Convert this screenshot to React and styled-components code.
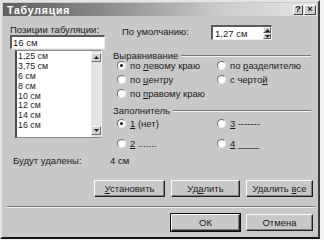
import styled, { createGlobalStyle } from "styled-components";

const GlobalStyle = createGlobalStyle`
  html, body {
    margin: 0;
    padding: 0;
    background: #f2f2f2;
  }
  body {
    font-family: "Liberation Sans", Arial, sans-serif;
  }
`;

const Dialog = styled.div`
  box-sizing: border-box;
  width: 320px;
  height: 239px;
  background: #c8c8c8;
  border-top: 2px solid #e4e4e4;
  border-left: 2px solid #e4e4e4;
  border-right: 2px solid #3c3c3c;
  border-bottom: 2px solid #141414;
  padding: 1px;
  display: flex;
  flex-direction: column;
  font-size: 9.5px;
  color: #1c1c1c;
`;

const TitleBar = styled.div`
  height: 13px;
  flex: none;
  display: flex;
  align-items: center;
  justify-content: space-between;
  padding: 0 1px 0 4px;
  background: linear-gradient(to right, #606060 0%, #868686 30%, #cccccc 70%, #e6e6e6 100%);
`;

const Title = styled.span`
  color: #fff;
  font-weight: bold;
  font-size: 10.5px;
  letter-spacing: 0.8px;
`;

const TitleButtons = styled.div`
  display: flex;
  gap: 1px;
`;

const TitleButton = styled.div`
  box-sizing: border-box;
  width: ${(p) => p.$w || 10}px;
  height: 10px;
  background: #cfcfcf;
  border: 1px solid;
  border-color: #fff #404040 #404040 #fff;
  display: flex;
  align-items: center;
  justify-content: center;
  font-size: 9px;
  font-weight: bold;
  line-height: 1;
  color: #111;
`;

const Top = styled.div`
  display: flex;
  height: 138px;
  flex: none;
`;

const LeftCol = styled.div`
  width: 95px;
  margin-left: 7px;
  display: flex;
  flex-direction: column;
`;

const Label = styled.div`
  height: 11px;
  line-height: 11px;
  margin-top: ${(p) => p.$mt || 0}px;
  white-space: nowrap;
`;

const TextInput = styled.div`
  box-sizing: border-box;
  height: 14px;
  background: #fff;
  border-top: 2px solid #5a5a5a;
  border-left: 2px solid #5a5a5a;
  border-right: 1px solid #eee;
  border-bottom: 1px solid #eee;
  padding-left: 1px;
  line-height: 11px;
  font-size: 9.5px;
  display: flex;
  align-items: center;
`;

const List = styled.div`
  box-sizing: border-box;
  height: 88px;
  width: 87px;
  margin-left: 5px;
  margin-top: 1px;
  background: #fff;
  border-left: 2px solid #4a4a4a;
  border-top: 1px solid #8a8a8a;
  border-bottom: 1px solid #8a8a8a;
  border-right: 1px solid #eee;
  display: flex;
`;

const Items = styled.div`
  flex: 1;
  padding-top: 1px;
`;

const Item = styled.div`
  height: 9.9px;
  line-height: 9.9px;
  padding-left: 1px;
  font-size: 8.8px;
`;

const ScrollBar = styled.div`
  width: 10px;
  background: #e4e4e4;
  display: flex;
  flex-direction: column;
  justify-content: space-between;
  padding: 2px 0;
  box-sizing: border-box;
`;

const ScrollButton = styled.div`
  box-sizing: border-box;
  height: 9px;
  background: #d0d0d0;
  border: 1px solid;
  border-color: #f4f4f4 #707070 #707070 #f4f4f4;
  display: flex;
  align-items: center;
  justify-content: center;
`;

const RightCol = styled.div`
  flex: 1;
  margin-left: 8px;
  margin-right: 2px;
  display: flex;
  flex-direction: column;
`;

const DefaultRow = styled.div`
  margin-top: 9px;
  height: 15px;
  display: flex;
  align-items: center;
`;

const DefaultLabel = styled.div`
  width: 98px;
  padding-left: 9px;
  box-sizing: border-box;
  margin-top: -2px;
`;

const SpinBox = styled.div`
  box-sizing: border-box;
  width: 61px;
  height: 15px;
  background: #fff;
  border-top: 2px solid #5a5a5a;
  border-left: 2px solid #5a5a5a;
  border-right: 1px solid #eee;
  border-bottom: 1px solid #eee;
  display: flex;
  align-items: center;
  padding-left: 2px;
`;

const SpinText = styled.span`
  flex: 1;
`;

const Spinner = styled.div`
  width: 8px;
  height: 12px;
  display: flex;
  flex-direction: column;
`;

const SpinPart = styled.div`
  flex: 1;
  box-sizing: border-box;
  background: #d0d0d0;
  border: 1px solid;
  border-color: #f4f4f4 #606060 #606060 #f4f4f4;
  display: flex;
  align-items: center;
  justify-content: center;
`;

const Legend = styled.div`
  display: flex;
  align-items: center;
  height: 9px;
  line-height: 9px;
  margin-top: ${(p) => p.$mt}px;
`;

const LegendLine = styled.div`
  flex: 1;
  margin-left: 3px;
  margin-right: 4px;
  height: 0;
  border-top: 1px solid #7a7a7a;
  border-bottom: 1px solid #f2f2f2;
`;

const RadioGrid = styled.div`
  display: grid;
  grid-template-columns: 100px 1fr;
  grid-auto-rows: ${(p) => p.$row}px;
  margin-left: 4px;
  margin-top: -2px;
`;

const RadioItem = styled.div`
  display: flex;
  align-items: center;
  gap: 4px;
  white-space: nowrap;
`;

const RadioCircle = styled.span`
  box-sizing: border-box;
  width: 9px;
  height: 9px;
  border-radius: 50%;
  background: #fff;
  border: 1px solid;
  border-color: #707070 #e8e8e8 #e8e8e8 #707070;
  display: flex;
  align-items: center;
  justify-content: center;
  flex: none;
  &::after {
    content: "";
    width: 3px;
    height: 3px;
    border-radius: 50%;
    background: ${(p) => (p.$checked ? "#111" : "transparent")};
  }
`;

const InfoRow = styled.div`
  display: flex;
  height: 12px;
  line-height: 12px;
  margin-top: 1px;
  padding-left: 10px;
`;

const InfoLabel = styled.div`
  width: 97px;
`;

const ButtonRow = styled.div`
  display: flex;
  justify-content: flex-end;
  gap: 6px;
  padding-right: 4px;
  margin-top: ${(p) => p.$mt}px;
`;

const Button = styled.div`
  box-sizing: border-box;
  width: ${(p) => p.$w || 68}px;
  height: 17px;
  background: #c8c8c8;
  border: 1px solid;
  border-color: #fafafa #202020 #202020 #fafafa;
  box-shadow: inset -1px -1px 0 #808080;
  outline: ${(p) => (p.$default ? "1px solid #111" : "none")};
  display: flex;
  align-items: center;
  justify-content: center;
  font-size: 9.5px;
`;

const Separator = styled.div`
  margin: 9px 2px 0 4px;
  border-top: 1px solid #7a7a7a;
  border-bottom: 1px solid #f0f0f0;
`;

const Up = () => (
  <svg width="5" height="3" viewBox="0 0 5 3">
    <path d="M2.5 0 L5 3 L0 3 Z" fill="#222" />
  </svg>
);

const Down = () => (
  <svg width="5" height="3" viewBox="0 0 5 3">
    <path d="M0 0 L5 0 L2.5 3 Z" fill="#222" />
  </svg>
);

const positions = ["1,25 см", "3,75 см", "6 см", "8 см", "10 см", "12 см", "14 см", "16 см"];

function App() {
  return (
    <>
      <GlobalStyle />
      <Dialog>
        <TitleBar>
          <Title>Табуляция</Title>
          <TitleButtons>
            <TitleButton $w={10}>?</TitleButton>
            <TitleButton $w={12}>×</TitleButton>
          </TitleButtons>
        </TitleBar>

        <Top>
          <LeftCol>
            <Label $mt={8}>Позиции табуляции:</Label>
            <TextInput>16 см</TextInput>
            <List>
              <Items>
                {positions.map((p) => (
                  <Item key={p}>{p}</Item>
                ))}
              </Items>
              <ScrollBar>
                <ScrollButton>
                  <Up />
                </ScrollButton>
                <ScrollButton>
                  <Down />
                </ScrollButton>
              </ScrollBar>
            </List>
          </LeftCol>

          <RightCol>
            <DefaultRow>
              <DefaultLabel>По умолчанию:</DefaultLabel>
              <SpinBox>
                <SpinText>1,27 см</SpinText>
                <Spinner>
                  <SpinPart>
                    <Up />
                  </SpinPart>
                  <SpinPart>
                    <Down />
                  </SpinPart>
                </Spinner>
              </SpinBox>
            </DefaultRow>

            <Legend $mt={11}>
              Выравнивание
              <LegendLine />
            </Legend>
            <RadioGrid $row={14}>
              <RadioItem>
                <RadioCircle $checked />
                <span>
                  по <u>л</u>евому краю
                </span>
              </RadioItem>
              <RadioItem>
                <RadioCircle />
                <span>
                  по <u>р</u>азделителю
                </span>
              </RadioItem>
              <RadioItem>
                <RadioCircle />
                <span>
                  по <u>ц</u>ентру
                </span>
              </RadioItem>
              <RadioItem>
                <RadioCircle />
                <span>
                  с черто<u>й</u>
                </span>
              </RadioItem>
              <RadioItem>
                <RadioCircle />
                <span>
                  по <u>п</u>равому краю
                </span>
              </RadioItem>
            </RadioGrid>

            <Legend $mt={6}>
              Заполнитель
              <LegendLine />
            </Legend>
            <RadioGrid $row={20}>
              <RadioItem>
                <RadioCircle $checked />
                <span>
                  <u>1</u> (нет)
                </span>
              </RadioItem>
              <RadioItem>
                <RadioCircle />
                <span>
                  <u>3</u> -------
                </span>
              </RadioItem>
              <RadioItem>
                <RadioCircle />
                <span>
                  <u>2</u> .......
                </span>
              </RadioItem>
              <RadioItem>
                <RadioCircle />
                <span>
                  <u>4</u> ____
                </span>
              </RadioItem>
            </RadioGrid>
          </RightCol>
        </Top>

        <InfoRow>
          <InfoLabel>Будут удалены:</InfoLabel>
          <span>4 см</span>
        </InfoRow>

        <ButtonRow $mt={13}>
          <Button $w={71}>
            <span>
              <u>У</u>становить
            </span>
          </Button>
          <Button $w={69}>
            <span>
              Уд<u>а</u>лить
            </span>
          </Button>
          <Button $w={67}>
            <span>
              Удалить <u>в</u>се
            </span>
          </Button>
        </ButtonRow>

        <Separator />

        <ButtonRow $mt={6}>
          <Button $w={69} $default>
            ОК
          </Button>
          <Button $w={67}>Отмена</Button>
        </ButtonRow>
      </Dialog>
    </>
  );
}

export default App;
